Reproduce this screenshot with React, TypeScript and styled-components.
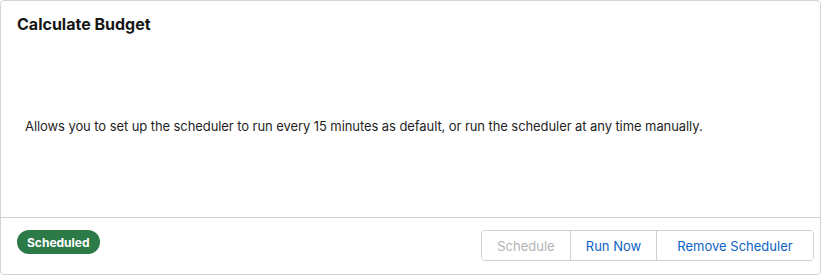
import React from "react";
import styled, { createGlobalStyle } from "styled-components";

const Global = createGlobalStyle`
  html, body { margin: 0; padding: 0; background: #ffffff; }
  body { font-family: Inter, "Liberation Sans", Arial, sans-serif; color: #1a1a1a; }
`;

const Card = styled.div`
  box-sizing: border-box;
  width: 821px;
  height: 275px;
  border: 1px solid #d4d4d4;
  border-radius: 4px;
  display: flex;
  flex-direction: column;
  background: #fff;
`;

const Header = styled.div`
  padding: 7px 16px 0 16px;
  height: 32px;
  display: flex;
  align-items: center;
`;

const Title = styled.h2`
  margin: 0;
  font-size: 16px;
  font-weight: 700;
  color: #161616;
`;

const Body = styled.div`
  flex: 1;
  display: flex;
  align-items: center;
  padding: 0 24px 6px 24px;
`;

const Description = styled.p`
  margin: 0;
  font-size: 13px;
  letter-spacing: -0.08px;
  color: #1f1f1f;
`;

const Footer = styled.div`
  border-top: 1px solid #cfcfcf;
  height: 57px;
  box-sizing: border-box;
  padding: 12px 6px 0 16px;
  display: flex;
  justify-content: space-between;
  align-items: flex-start;
`;

const Badge = styled.span`
  display: inline-flex;
  align-items: center;
  justify-content: center;
  height: 24px;
  padding: 0 10px;
  border-radius: 12px;
  background: #2b7a48;
  color: #fff;
  font-size: 12px;
  font-weight: 700;
`;

const ButtonGroup = styled.div`
  display: flex;
  border: 1px solid #cfcfcf;
  border-radius: 4px;
  height: 31px;
  box-sizing: border-box;
  overflow: hidden;
`;

const Button = styled.button<{ $width: number; $disabled?: boolean }>`
  width: ${(p) => p.$width}px;
  border: none;
  background: #fff;
  font-family: inherit;
  font-size: 13px;
  padding: 0;
  color: ${(p) => (p.$disabled ? "#b3b3b3" : "#0b63c4")};
  cursor: ${(p) => (p.$disabled ? "default" : "pointer")};
  & + & {
    border-left: 1px solid #cfcfcf;
  }
`;

export default function App() {
  return (
    <>
      <Global />
      <Card>
        <Header>
          <Title>Calculate Budget</Title>
        </Header>
        <Body>
          <Description>
            Allows you to set up the scheduler to run every 15 minutes as default, or run the scheduler at any time manually.
          </Description>
        </Body>
        <Footer>
          <Badge>Scheduled</Badge>
          <ButtonGroup>
            <Button $width={88} $disabled>Schedule</Button>
            <Button $width={86}>Run Now</Button>
            <Button $width={157}>Remove Scheduler</Button>
          </ButtonGroup>
        </Footer>
      </Card>
    </>
  );
}
